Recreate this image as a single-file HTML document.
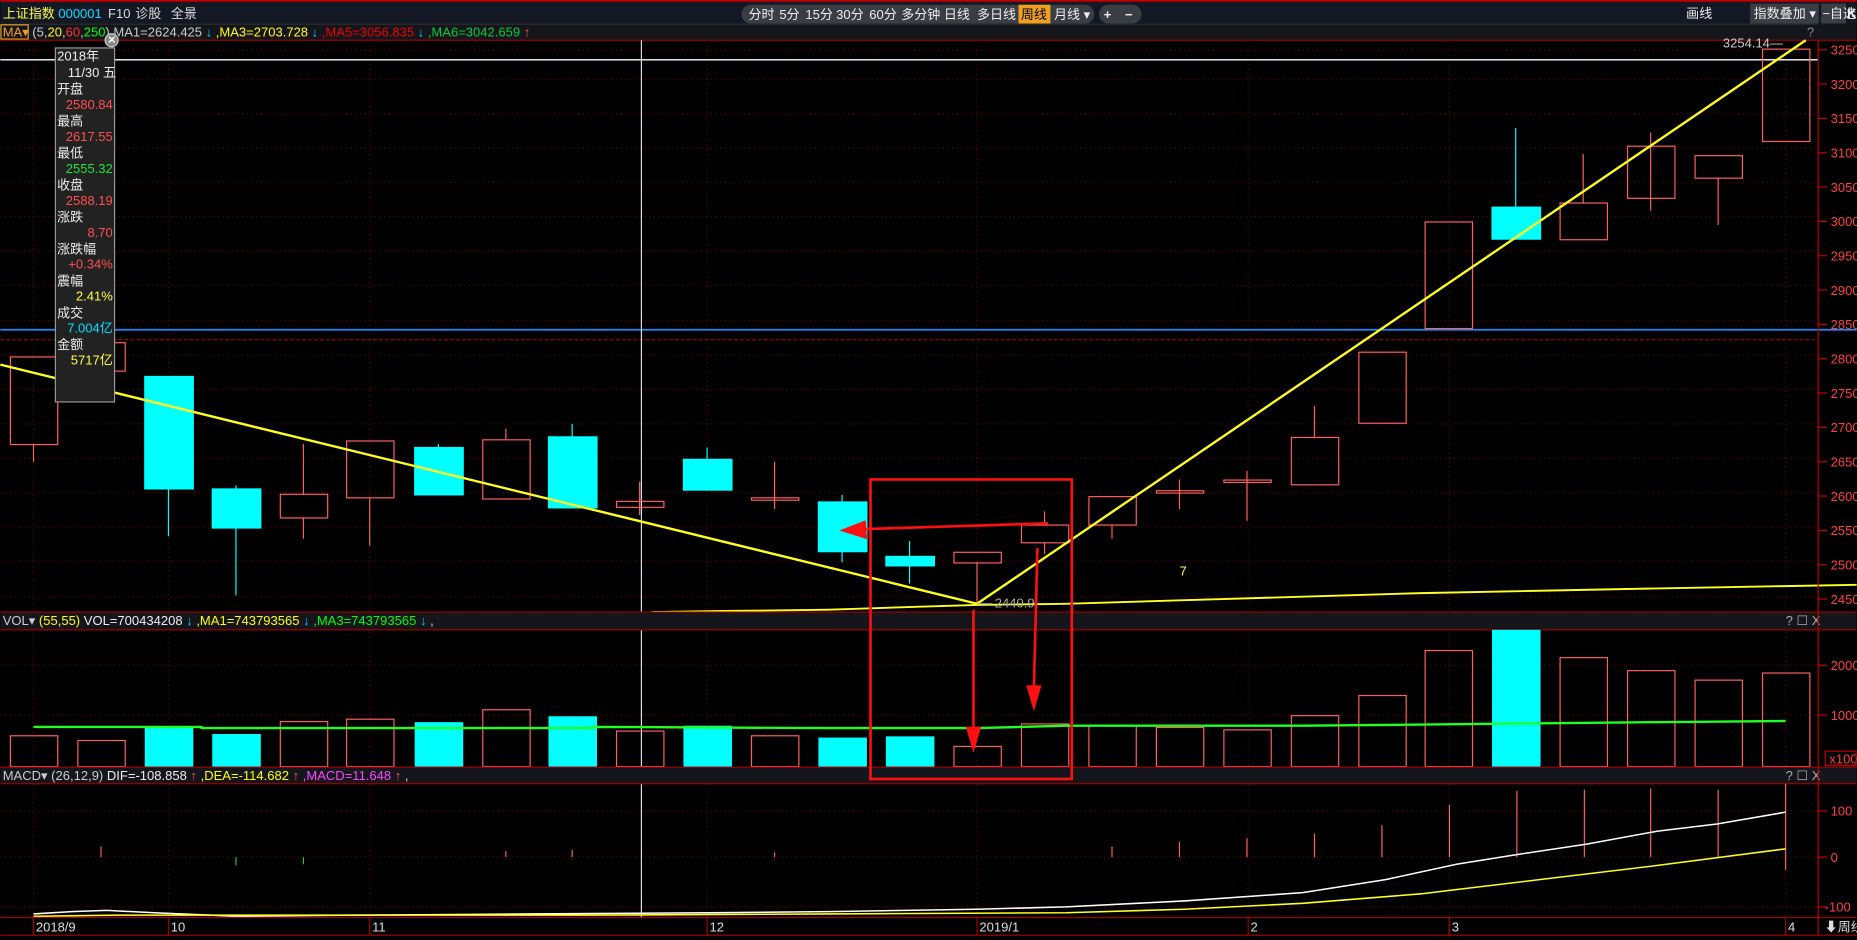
<!DOCTYPE html>
<html><head><meta charset="utf-8"><style>
html,body{margin:0;padding:0;background:#000;overflow:hidden;width:1857px;height:940px}
svg{display:block}
text{font-family:"Liberation Sans","Noto Sans CJK SC",sans-serif;font-size:11px}
</style></head><body>
<svg width="1857" height="940" viewBox="0 0 1568 794" xmlns="http://www.w3.org/2000/svg">
<rect width="1568" height="794" fill="#000"/>
<!-- top bar -->
<rect x="0" y="0" width="1568" height="20" fill="#141824"/>
<rect x="0" y="0" width="1568" height="1.5" fill="#c00000"/>
<text x="2" y="15" fill="#ffff40" font-size="12">上证指数</text>
<text x="49" y="15" fill="#00e0ff" font-size="10">000001</text>
<text x="91" y="15" fill="#ddd">F10</text>
<text x="114" y="15" fill="#ddd">诊股</text>
<text x="144" y="15" fill="#ddd">全景</text>
<rect x="626" y="4" width="298" height="16" rx="8" fill="#3a3d44"/>
<rect x="860" y="4" width="27" height="16" fill="#f0a020"/>
<g fill="#eee" font-size="11">
<text x="632" y="16">分时</text><text x="658" y="16">5分</text><text x="680" y="16">15分</text><text x="706" y="16">30分</text><text x="734" y="16">60分</text><text x="761" y="16">多分钟</text><text x="797" y="16">日线</text><text x="825" y="16">多日线</text><text x="862" y="16" fill="#000">周线</text><text x="890" y="16">月线 ▾</text>
</g>
<rect x="928" y="4" width="36" height="16" rx="8" fill="#3a3d44"/>
<text x="932" y="16" fill="#eee" font-weight="bold">+</text><text x="950" y="16" fill="#eee" font-weight="bold">−</text>
<text x="1424" y="15" fill="#eee">画线</text>
<rect x="1478" y="3" width="58" height="17" fill="#3a3d44"/>
<text x="1481" y="15" fill="#eee">指数叠加 ▾</text>
<rect x="1538" y="3" width="21" height="17" fill="#3a3d44"/>
<text x="1539" y="15" fill="#eee" font-size="9">−自选</text>
<text x="1560" y="15" fill="#eee" font-weight="bold">K</text>
<!-- MA legend row -->
<rect x="0" y="20" width="1568" height="14" fill="#14161c"/>
<rect x="0" y="20" width="1535" height="0.8" fill="#333"/>
<rect x="0.5" y="21" width="23" height="12" fill="none" stroke="#f0a020"/>
<text x="2" y="31" fill="#f0a020" font-size="10">MA▾</text>
<text x="27" y="31" font-size="10"><tspan fill="#ccc">(5,</tspan><tspan fill="#ff0">20</tspan><tspan fill="#ccc">,</tspan><tspan fill="#f33">60</tspan><tspan fill="#ccc">,</tspan><tspan fill="#0f0">250</tspan><tspan fill="#ccc">) MA1=2624.425 </tspan><tspan fill="#0cf">↓</tspan><tspan fill="#ff0"> ,MA3=2703.728 </tspan><tspan fill="#0cf">↓</tspan><tspan fill="#e00"> ,MA5=3056.835 </tspan><tspan fill="#0cf">↓</tspan><tspan fill="#0c4"> ,MA6=3042.659 </tspan><tspan fill="#f55">↑</tspan></text>
<text x="1526" y="31" fill="#888" font-size="10">?</text>
<rect x="0" y="33.5" width="1568" height="1" fill="#a00000"/>
<!-- grid main -->
<g stroke="#6a0000" stroke-width="1" stroke-dasharray="1,3">
<line x1="0" y1="67" x2="1535" y2="67"/><line x1="0" y1="96" x2="1535" y2="96"/><line x1="0" y1="125" x2="1535" y2="125"/><line x1="0" y1="154" x2="1535" y2="154"/><line x1="0" y1="183" x2="1535" y2="183"/><line x1="0" y1="212" x2="1535" y2="212"/><line x1="0" y1="241" x2="1535" y2="241"/><line x1="0" y1="271" x2="1535" y2="271"/><line x1="0" y1="300" x2="1535" y2="300"/><line x1="0" y1="329" x2="1535" y2="329"/><line x1="0" y1="358" x2="1535" y2="358"/><line x1="0" y1="387" x2="1535" y2="387"/><line x1="0" y1="416" x2="1535" y2="416"/><line x1="0" y1="445" x2="1535" y2="445"/><line x1="0" y1="474" x2="1535" y2="474"/><line x1="0" y1="504" x2="1535" y2="504"/><line x1="0" y1="42" x2="1535" y2="42"/>
<line x1="0" y1="562" x2="1535" y2="562"/><line x1="0" y1="604" x2="1535" y2="604"/><line x1="0" y1="685" x2="1535" y2="685"/><line x1="0" y1="724" x2="1535" y2="724"/><line x1="0" y1="766" x2="1535" y2="766"/>
<line x1="28" y1="34" x2="28" y2="775"/><line x1="142" y1="34" x2="142" y2="775"/><line x1="312" y1="34" x2="312" y2="775"/><line x1="597" y1="34" x2="597" y2="775"/><line x1="825" y1="34" x2="825" y2="775"/><line x1="1054" y1="34" x2="1054" y2="775"/><line x1="1224" y1="34" x2="1224" y2="775"/><line x1="1508" y1="34" x2="1508" y2="775"/>
</g>
<line x1="0" y1="287" x2="1535" y2="287" stroke="#a00000" stroke-dasharray="3,2"/>
<line x1="0" y1="50.5" x2="1535" y2="50.5" stroke="#fff" stroke-width="1.2"/>
<line x1="0" y1="278.5" x2="1568" y2="278.5" stroke="#1e88ff" stroke-width="1.5"/>
<line x1="541.5" y1="34" x2="541.5" y2="775" stroke="#ddd" stroke-width="1"/>
<!-- candles -->
<g stroke="#ff6060" fill="none" stroke-width="1">
<line x1="28" y1="375" x2="28" y2="390"/><rect x="8.5" y="301.5" width="40" height="74"/>
<rect x="65.5" y="289.5" width="40" height="24"/>
<line x1="256" y1="375" x2="256" y2="455"/><rect x="236.5" y="417.5" width="40" height="20" fill="#000"/>
<line x1="312" y1="420" x2="312" y2="461"/><rect x="292.5" y="372.5" width="40" height="48" fill="none"/>
<line x1="427" y1="362" x2="427" y2="371"/><rect x="407.5" y="371.5" width="40" height="50"/>
<line x1="540" y1="407" x2="540" y2="435"/><rect x="520.5" y="423.5" width="40" height="5"/>
<line x1="654" y1="390" x2="654" y2="430"/><rect x="634.5" y="420.5" width="40" height="2"/>
<line x1="825" y1="475" x2="825" y2="510"/><rect x="805.5" y="466.5" width="40" height="9"/>
<line x1="882" y1="432" x2="882" y2="443"/><line x1="882" y1="458" x2="882" y2="468"/><rect x="862.5" y="443.5" width="40" height="15"/>
<line x1="939" y1="443" x2="939" y2="455"/><rect x="919.5" y="419.5" width="40" height="24"/>
<line x1="996" y1="405" x2="996" y2="430"/><rect x="976.5" y="414.5" width="40" height="2"/>
<line x1="1053" y1="398" x2="1053" y2="440"/><rect x="1033.5" y="405.5" width="40" height="2"/>
<line x1="1110" y1="343" x2="1110" y2="369"/><rect x="1090.5" y="369.5" width="40" height="40"/>
<rect x="1147.5" y="297.5" width="40" height="60"/>
<rect x="1203.5" y="187.5" width="40" height="90"/>
<line x1="1337" y1="130" x2="1337" y2="171"/><rect x="1317.5" y="171.5" width="40" height="31"/>
<line x1="1394" y1="112" x2="1394" y2="178"/><rect x="1374.5" y="123.5" width="40" height="44"/>
<line x1="1451" y1="150" x2="1451" y2="190"/><rect x="1431.5" y="131.5" width="40" height="19"/>
<rect x="1488.5" y="41.5" width="40" height="78"/>
</g>
<g stroke="#00ffff" fill="#00ffff">
<line x1="142" y1="412" x2="142" y2="453"/><rect x="122" y="318" width="41" height="95"/>
<line x1="199" y1="410" x2="199" y2="503"/><rect x="179" y="413" width="41" height="33"/>
<line x1="370" y1="375" x2="370" y2="378"/><rect x="350" y="378" width="41" height="40"/>
<line x1="483" y1="358" x2="483" y2="428"/><rect x="463" y="369" width="41" height="60"/>
<line x1="597" y1="378" x2="597" y2="388"/><rect x="577" y="388" width="41" height="26"/>
<line x1="711" y1="418" x2="711" y2="475"/><rect x="691" y="424" width="41" height="42"/>
<line x1="768" y1="457" x2="768" y2="493"/><rect x="748" y="470" width="41" height="8"/>
<line x1="1280" y1="108" x2="1280" y2="175"/><rect x="1260" y="175" width="41" height="27"/>
</g>
<!-- yellow lines -->
<g stroke="#ffff20" stroke-width="2" fill="none">
<line x1="0" y1="308" x2="825" y2="510"/>
<line x1="825" y1="510" x2="1525" y2="34"/>
<polyline points="550,517 620,516 700,515 760,513 825,511 900,510 1000,507 1100,504 1200,501 1300,499 1400,497 1568,494" stroke-width="1.6"/>
</g>
<text x="996" y="486" fill="#ffff40" font-family="Liberation Serif,serif" font-size="18">7</text>
<line x1="825" y1="510" x2="838" y2="510" stroke="#aaa"/>
<text x="840" y="513" fill="#aaa" font-size="9">2440.9</text>
<text x="1455" y="40" fill="#ccc" font-size="9">3254.14—</text>
<!-- tooltip -->
<rect x="46.5" y="40.5" width="50" height="299" fill="#222" stroke="#999"/>
<circle cx="94" cy="34" r="5.5" fill="#888" stroke="#ccc"/>
<text x="91" y="37" fill="#fff" font-size="8" font-weight="bold">×</text>
<g font-size="10">
<text x="48" y="51" fill="#eee">2018年</text>
<text x="57" y="65" fill="#eee">11/30 五</text>
<text x="48" y="79" fill="#eee">开盘</text><text x="95" y="92" fill="#ff5050" text-anchor="end">2580.84</text>
<text x="48" y="106" fill="#eee">最高</text><text x="95" y="119" fill="#ff5050" text-anchor="end">2617.55</text>
<text x="48" y="133" fill="#eee">最低</text><text x="95" y="146" fill="#20e040" text-anchor="end">2555.32</text>
<text x="48" y="160" fill="#eee">收盘</text><text x="95" y="173" fill="#ff5050" text-anchor="end">2588.19</text>
<text x="48" y="187" fill="#eee">涨跌</text><text x="95" y="200" fill="#ff5050" text-anchor="end">8.70</text>
<text x="48" y="214" fill="#eee">涨跌幅</text><text x="95" y="227" fill="#ff5050" text-anchor="end">+0.34%</text>
<text x="48" y="241" fill="#eee">震幅</text><text x="95" y="254" fill="#ffff40" text-anchor="end">2.41%</text>
<text x="48" y="268" fill="#eee">成交</text><text x="95" y="281" fill="#00e0ff" text-anchor="end">7.004亿</text>
<text x="48" y="295" fill="#eee">金额</text><text x="95" y="308" fill="#ffff40" text-anchor="end">5717亿</text>
</g>
<!-- VOL header -->
<rect x="0" y="517" width="1568" height="15" fill="#14161c"/>
<rect x="0" y="516.5" width="1568" height="1" fill="#a00000"/>
<rect x="0" y="531.5" width="1568" height="1" fill="#a00000"/>
<text x="2" y="528" font-size="10"><tspan fill="#ccc">VOL▾ </tspan><tspan fill="#ff0">(55,55) </tspan><tspan fill="#eee">VOL=700434208 </tspan><tspan fill="#0cf">↓</tspan><tspan fill="#ff0"> ,MA1=743793565 </tspan><tspan fill="#0cf">↓</tspan><tspan fill="#0f0"> ,MA3=743793565 </tspan><tspan fill="#0cf">↓</tspan><tspan fill="#ccc"> ,</tspan></text>
<text x="1508" y="528" fill="#aaa" font-size="10">? ☐ X</text>
<!-- VOL bars -->
<g stroke="#ff6060" fill="none">
<rect x="8.5" y="621.5" width="40" height="26"/><rect x="65.5" y="625.5" width="40" height="22"/>
<rect x="236.5" y="609.5" width="40" height="38"/><rect x="292.5" y="607.5" width="40" height="40"/>
<rect x="407.5" y="599.5" width="40" height="48"/><rect x="520.5" y="617.5" width="40" height="30"/>
<rect x="634.5" y="621.5" width="40" height="26"/><rect x="805.5" y="630.5" width="40" height="17"/>
<rect x="862.5" y="611.5" width="40" height="36"/><rect x="919.5" y="612.5" width="40" height="35"/>
<rect x="976.5" y="614.5" width="40" height="33"/><rect x="1033.5" y="616.5" width="40" height="31"/>
<rect x="1090.5" y="604.5" width="40" height="43"/><rect x="1147.5" y="587.5" width="40" height="60"/>
<rect x="1203.5" y="549.5" width="40" height="98"/><rect x="1317.5" y="555.5" width="40" height="92"/>
<rect x="1374.5" y="566.5" width="40" height="81"/><rect x="1431.5" y="574.5" width="40" height="73"/>
<rect x="1488.5" y="568.5" width="40" height="79"/>
</g>
<g fill="#00ffff">
<rect x="122" y="614" width="41" height="34"/><rect x="179" y="620" width="41" height="28"/>
<rect x="350" y="610" width="41" height="38"/><rect x="463" y="605" width="41" height="43"/>
<rect x="577" y="613" width="41" height="35"/><rect x="691" y="623" width="41" height="25"/>
<rect x="748" y="622" width="41" height="26"/><rect x="1260" y="532" width="41" height="116"/>
</g>
<polyline points="28,614 170,614 170,615 500,615 500,614 700,615 825,615 900,613 1100,613 1200,612 1300,611 1400,610 1508,609" stroke="#20ff20" stroke-width="2" fill="none"/>
<!-- MACD header -->
<rect x="0" y="648" width="1568" height="14" fill="#14161c"/>
<rect x="0" y="647.5" width="1568" height="1" fill="#a00000"/>
<rect x="0" y="661.5" width="1568" height="1" fill="#a00000"/>
<text x="2" y="659" font-size="10"><tspan fill="#ccc">MACD▾ (26,12,9) </tspan><tspan fill="#eee">DIF=-108.858 </tspan><tspan fill="#f55">↑</tspan><tspan fill="#ff0"> ,DEA=-114.682 </tspan><tspan fill="#f55">↑</tspan><tspan fill="#f4f"> ,MACD=11.648 </tspan><tspan fill="#f55">↑</tspan><tspan fill="#ccc"> ,</tspan></text>
<text x="1508" y="659" fill="#aaa" font-size="10">? ☐ X</text>
<!-- MACD bars -->
<g stroke="#ff6060">
<line x1="85" y1="715" x2="85" y2="724"/><line x1="427" y1="719" x2="427" y2="724"/><line x1="483" y1="718" x2="483" y2="724"/><line x1="654" y1="720" x2="654" y2="724"/>
<line x1="939" y1="715" x2="939" y2="724"/><line x1="996" y1="711" x2="996" y2="724"/><line x1="1053" y1="708" x2="1053" y2="724"/><line x1="1110" y1="704" x2="1110" y2="724"/><line x1="1167" y1="697" x2="1167" y2="724"/>
<line x1="1224" y1="680" x2="1224" y2="724"/><line x1="1281" y1="668" x2="1281" y2="724"/><line x1="1338" y1="667" x2="1338" y2="724"/><line x1="1394" y1="666" x2="1394" y2="724"/><line x1="1451" y1="667" x2="1451" y2="724"/><line x1="1508" y1="662" x2="1508" y2="735"/>
</g>
<g stroke="#20c040"><line x1="199" y1="724" x2="199" y2="731"/><line x1="256" y1="724" x2="256" y2="730"/></g>
<polyline points="28,772 60,770 90,769 130,771 200,774 300,773 450,772 600,771 700,770 825,768 900,766 1000,761 1100,754 1170,743 1230,730 1280,722 1340,713 1400,702 1450,696 1508,686" stroke="#fff" stroke-width="1.3" fill="none"/>
<polyline points="28,774 100,773 300,773 500,773 700,772 900,771 1000,768 1100,763 1200,755 1300,743 1400,731 1508,717" stroke="#ffff20" stroke-width="1.3" fill="none"/>
<!-- bottom axis -->
<rect x="0" y="774.5" width="1568" height="1" fill="#a00000"/>
<rect x="0" y="789.5" width="1568" height="1" fill="#a00000"/>
<g fill="#ddd" font-size="10">
<text x="30" y="787">2018/9</text><text x="144" y="787">10</text><text x="314" y="787">11</text><text x="599" y="787">12</text><text x="827" y="787">2019/1</text><text x="1056" y="787">2</text><text x="1226" y="787">3</text><text x="1510" y="787">4</text><text x="1541" y="787">⬇周线</text>
</g>
<g stroke="#a00000"><line x1="28" y1="775" x2="28" y2="790"/><line x1="142" y1="775" x2="142" y2="790"/><line x1="312" y1="775" x2="312" y2="790"/><line x1="597" y1="775" x2="597" y2="790"/><line x1="825" y1="775" x2="825" y2="790"/><line x1="1054" y1="775" x2="1054" y2="790"/><line x1="1224" y1="775" x2="1224" y2="790"/><line x1="1508" y1="775" x2="1508" y2="790"/></g>
<!-- right axis -->
<rect x="1535" y="34" width="1" height="756" fill="#c00000"/>
<g fill="#ff4040" font-size="10">
<text x="1546" y="46">3250</text><text x="1546" y="75">3200</text><text x="1546" y="104">3150</text><text x="1546" y="133">3100</text><text x="1546" y="162">3050</text><text x="1546" y="191">3000</text><text x="1546" y="220">2950</text><text x="1546" y="249">2900</text><text x="1546" y="278">2850</text><text x="1546" y="307">2800</text><text x="1546" y="336">2750</text><text x="1546" y="365">2700</text><text x="1546" y="394">2650</text><text x="1546" y="423">2600</text><text x="1546" y="452">2550</text><text x="1546" y="481">2500</text><text x="1546" y="510">2450</text>
<text x="1546" y="566">2000</text><text x="1546" y="608">1000</text><text x="1545" y="645">x100</text>
<text x="1546" y="689">100</text><text x="1546" y="728">0</text><text x="1541" y="770">-100</text>
</g>
<rect x="1541.5" y="634.5" width="26" height="12" fill="none" stroke="#c00000"/>
<g stroke="#c00000"><line x1="1535" y1="42" x2="1543" y2="42"/><line x1="1535" y1="71" x2="1543" y2="71"/><line x1="1535" y1="100" x2="1543" y2="100"/><line x1="1535" y1="129" x2="1543" y2="129"/><line x1="1535" y1="158" x2="1543" y2="158"/><line x1="1535" y1="187" x2="1543" y2="187"/><line x1="1535" y1="216" x2="1543" y2="216"/><line x1="1535" y1="245" x2="1543" y2="245"/><line x1="1535" y1="274" x2="1543" y2="274"/><line x1="1535" y1="303" x2="1543" y2="303"/><line x1="1535" y1="332" x2="1543" y2="332"/><line x1="1535" y1="361" x2="1543" y2="361"/><line x1="1535" y1="390" x2="1543" y2="390"/><line x1="1535" y1="419" x2="1543" y2="419"/><line x1="1535" y1="448" x2="1543" y2="448"/><line x1="1535" y1="477" x2="1543" y2="477"/><line x1="1535" y1="506" x2="1543" y2="506"/><line x1="1535" y1="562" x2="1543" y2="562"/><line x1="1535" y1="604" x2="1543" y2="604"/><line x1="1535" y1="685" x2="1543" y2="685"/><line x1="1535" y1="724" x2="1543" y2="724"/><line x1="1535" y1="766" x2="1543" y2="766"/></g>
<!-- annotations -->
<rect x="735" y="405" width="170" height="253" fill="none" stroke="#ff1010" stroke-width="2.2"/>
<g stroke="#ff1010" stroke-width="2.2" fill="#ff1010">
<line x1="885" y1="442" x2="728" y2="447"/><polygon points="712,448 730,441 731,454"/>
<line x1="822" y1="515" x2="822" y2="618"/><polygon points="822,632 817,615 827,615"/>
<line x1="876" y1="463" x2="873" y2="582"/><polygon points="873,597 868,580 878,580"/>
</g>
</svg>
</body></html>
